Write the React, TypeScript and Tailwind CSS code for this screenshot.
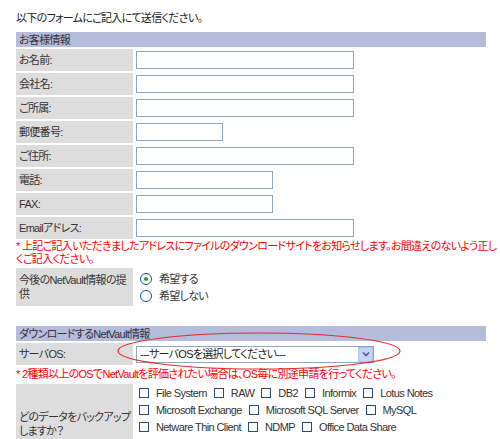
import React from "react";

const font = {
  fontFamily: '"Liberation Sans", "Noto Sans CJK JP", sans-serif',
};

function Row({ label, width }: { label: string; width: number }) {
  return (
    <div className="flex gap-[2px] mt-[2px] h-[22px]">
      <div className="w-[117px] shrink-0 bg-[#dddddd] flex items-center pl-[3px] text-[#333] whitespace-nowrap">{label}</div>
      <div className="flex items-center pl-[1px]">
        <div
          className="h-[18px] border border-[#8ea6c4] bg-white"
          style={{ width }}
        />
      </div>
    </div>
  );
}

function Check({ label }: { label: string }) {
  return (
    <span className="inline-flex items-center mr-[7px]">
      <span className="w-[10px] h-[10px] border border-[#2b4a6e] bg-white mr-[7px] shrink-0" />
      <span className="text-[#333] tracking-[-0.6px]">{label}</span>
    </span>
  );
}

export default function App() {
  const lines = [
    ["File System", "RAW", "DB2", "Informix", "Lotus Notes"],
    ["Microsoft Exchange", "Microsoft SQL Server", "MySQL"],
    ["Netware Thin Client", "NDMP", "Office Data Share"],
    ["Oracle Database", "PostgreSQL", "SharePoint"],
  ];
  return (
    <div
      className="relative w-[500px] h-[439px] overflow-hidden bg-white text-[11px] leading-[14px] text-[#222] tracking-[-0.7px]"
      style={{ ...font, fontFeatureSettings: '"palt"' }}
    >
      <div className="pl-[16px] pt-[11px] w-[486px]">
        <div className="h-[14px] whitespace-nowrap">以下のフォームにご記入にて送信ください。</div>
        <div className="mt-[7px] h-[15px] bg-[#b5bcdc] pl-[3px] flex items-center text-[#333]">お客様情報</div>
        <Row label="お名前:" width={218} />
        <Row label="会社名:" width={218} />
        <Row label="ご所属:" width={218} />
        <Row label="郵便番号:" width={87} />
        <Row label="ご住所:" width={218} />
        <Row label="電話:" width={137} />
        <Row label="FAX:" width={137} />
        <Row label="Emailアドレス:" width={218} />
        <div className="mt-[1px] text-[#ff0000] leading-[13px] whitespace-nowrap">
          * 上記ご記入いただきましたアドレスにファイルのダウンロードサイトをお知らせします。お間違えのないよう正し
          <br />
          くご記入ください。
        </div>
        <div className="flex gap-[2px] mt-[2px] h-[38px]">
          <div className="w-[117px] shrink-0 bg-[#dddddd] flex items-center pl-[3px] text-[#333] whitespace-nowrap">
            <div>
              今後のNetVault情報の提
              <br />供
            </div>
          </div>
          <div className="flex flex-col pl-[5px] pt-[4px] gap-[3px]">
            <label className="flex items-center h-[14px]">
              <span className="w-[12px] h-[12px] rounded-full border border-[#1c5180] bg-white flex items-center justify-center mr-[7px]">
                <span className="w-[4px] h-[4px] rounded-full bg-[#21a121]" />
              </span>
              <span className="text-[#333]">希望する</span>
            </label>
            <label className="flex items-center h-[14px]">
              <span className="w-[12px] h-[12px] rounded-full border border-[#1c5180] bg-white mr-[7px]" />
              <span className="text-[#333]">希望しない</span>
            </label>
          </div>
        </div>
        <div className="mt-[20px] h-[15px] bg-[#b5bcdc] pl-[3px] flex items-center text-[#333]">ダウンロードするNetVault情報</div>
        <div className="flex gap-[2px] mt-[2px] h-[22px]">
          <div className="w-[117px] shrink-0 bg-[#dddddd] flex items-center pl-[3px] text-[#333]">サーバOS:</div>
          <div className="flex items-center pl-[1px]">
            <div className="w-[238px] h-[17px] border border-[#8ea6c4] bg-white flex items-center">
              <span className="flex-1 pl-[3px] text-[#222] whitespace-nowrap">---サーバOSを選択してください---</span>
              <span className="w-[15px] h-[15px] bg-[#c4d3f6] border border-[#b1c3ea] flex items-center justify-center">
                <svg width="8" height="6" viewBox="0 0 8 6">
                  <path d="M1 1.5 L4 4.5 L7 1.5" stroke="#4d6185" strokeWidth="1.6" fill="none" />
                </svg>
              </span>
            </div>
          </div>
        </div>
        <div className="mt-[3px] text-[#ff0000] leading-[13px] whitespace-nowrap">
          * 2種類以上のOSでNetVaultを評価されたい場合は、OS毎に別途申請を行ってください。
        </div>
        <div className="flex gap-[2px] mt-[3px] h-[80px]">
          <div className="w-[117px] shrink-0 bg-[#dddddd] flex items-center pl-[3px] text-[#333] whitespace-nowrap">
            <div>
              どのデータをバックアップ
              <br />
              しますか？
            </div>
          </div>
          <div className="flex flex-col pl-[4px] pt-[0px]">
            {lines.map((l, i) => (
              <div key={i} className="h-[17px] flex items-center whitespace-nowrap">
                {l.map((c) => (
                  <Check key={c} label={c} />
                ))}
              </div>
            ))}
          </div>
        </div>
      </div>
      <svg className="absolute left-0 top-0 pointer-events-none" width="500" height="439">
        <ellipse cx="259" cy="351" rx="141" ry="18" fill="none" stroke="#e62a2e" strokeWidth="1.2" />
      </svg>
    </div>
  );
}
